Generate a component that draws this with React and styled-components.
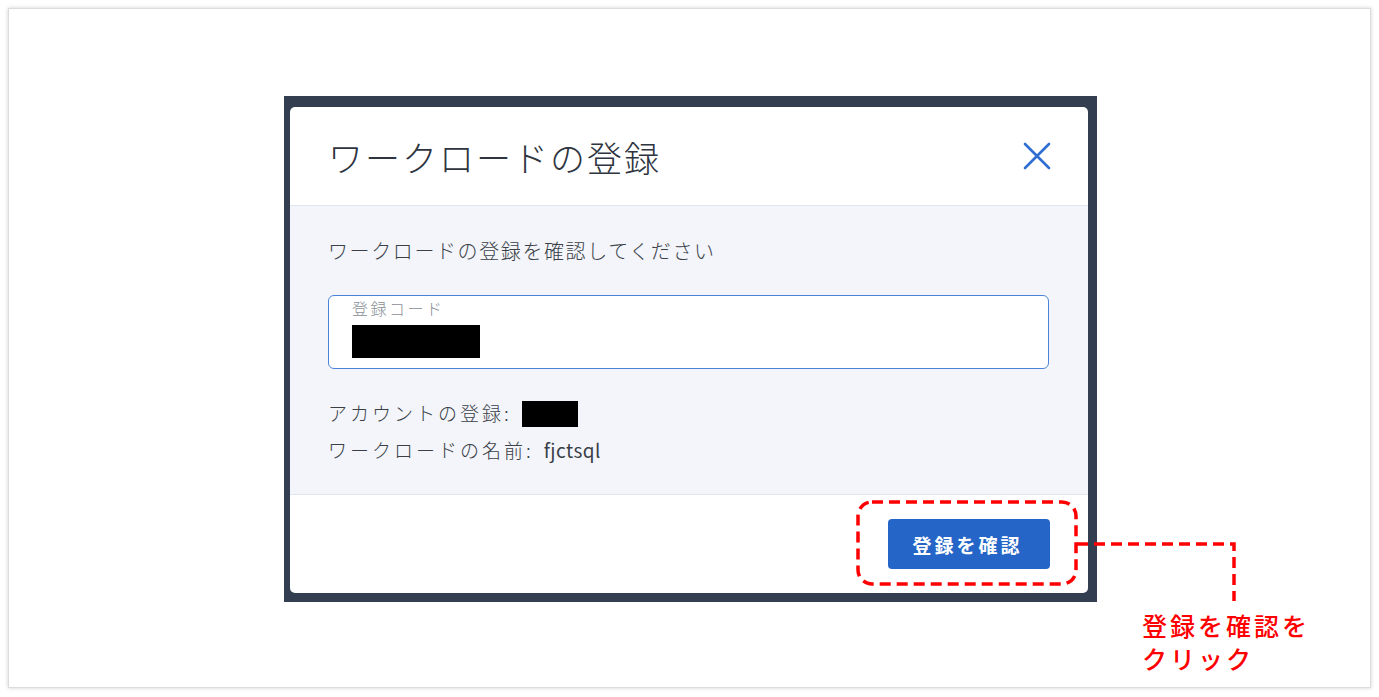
import styled, { createGlobalStyle } from 'styled-components';

const Global = createGlobalStyle`
    body {
        margin: 0;
        background: #ffffff;
        font-family: 'Noto Sans', 'Noto Sans CJK JP', sans-serif;
    }
`;

const Frame = styled.div`
    position: relative;
    box-sizing: border-box;
    width: 1363px;
    height: 680px;
    margin: 8px;
    padding: 87px 0 0 275px;
    background: #ffffff;
    border: 1px solid #dcdcdc;
    box-shadow: 0 0 4px rgba(0, 0, 0, 0.18);
`;

const Backdrop = styled.div`
    box-sizing: border-box;
    width: 813px;
    height: 506px;
    padding: 11px 9px 9px 6px;
    background: #333f51;
`;

const Dialog = styled.div`
    display: flex;
    flex-direction: column;
    width: 798px;
    height: 486px;
    border-radius: 5px;
    overflow: hidden;
    background: #ffffff;
`;

const Header = styled.div`
    display: flex;
    align-items: center;
    justify-content: space-between;
    height: 99px;
    padding: 0 36px 0 38px;
    border-bottom: 1px solid #dfe5f0;
    box-sizing: border-box;
`;

const Title = styled.h1`
    margin: 0;
    font-family: 'Noto Sans CJK JP', sans-serif;
    font-size: 35px;
    font-weight: 300;
    color: #2e3440;
    letter-spacing: 2px;
`;

const Close = styled.button`
    display: flex;
    padding: 0;
    border: none;
    background: none;
`;

const Body = styled.div`
    flex: 1;
    padding: 30px 38px 0 38px;
    background: #f3f5fa;
    font-family: 'Noto Sans CJK JP', sans-serif;
    color: #3a3f48;
`;

const Lead = styled.p`
    margin: 0 0 30px 0;
    font-size: 20px;
    font-weight: 300;
    letter-spacing: 1.6px;
`;

const Field = styled.div`
    box-sizing: border-box;
    width: 721px;
    height: 74px;
    padding: 0 24px 0 23px;
    background: #ffffff;
    border: 1.5px solid #4a84d9;
    border-radius: 6px;
`;

const FieldLabel = styled.div`
    font-size: 16px;
    font-weight: 300;
    color: #8a8f98;
    line-height: 24px;
    letter-spacing: 2.5px;
    margin-bottom: 5px;
`;

const Redact = styled.span`
    display: inline-block;
    width: ${({ w }) => w}px;
    height: ${({ h }) => h}px;
    background: #000000;
    vertical-align: middle;
`;

const Info = styled.div`
    margin-top: 29px;
    display: flex;
    flex-direction: column;
    gap: 9px;
`;

const InfoRow = styled.div`
    display: flex;
    align-items: center;
    height: 28px;
    font-size: 19px;
    font-weight: 300;
    color: #3a3f48;
    letter-spacing: 3px;
`;

const Value = styled.span`
    margin-left: 10px;
    font-weight: 400;
    letter-spacing: 0.5px;
`;

const Footer = styled.div`
    display: flex;
    align-items: center;
    justify-content: flex-end;
    height: 99px;
    padding: 0 38px 0 0;
    box-sizing: border-box;
    border-top: 1px solid #dfe5f0;
`;

const Confirm = styled.button`
    width: 162px;
    height: 50px;
    border: none;
    border-radius: 4px;
    background: #2565c7;
    color: #ffffff;
    font-family: 'Noto Sans CJK JP', sans-serif;
    font-size: 19px;
    font-weight: 700;
    letter-spacing: 3px;
    padding-left: 3px;
`;

const Callout = styled.svg`
    position: absolute;
    left: 0;
    top: 0;
    pointer-events: none;
`;

const Note = styled.div`
    position: absolute;
    left: 1133px;
    top: 600px;
    font-family: 'Noto Sans CJK JP', sans-serif;
    font-size: 25px;
    font-weight: 500;
    line-height: 33px;
    color: #ff0000;
    letter-spacing: 3px;
`;

const App = () => {
    return (
        <>
            <Global />
            <Frame>
                <Backdrop>
                    <Dialog>
                        <Header>
                            <Title>ワークロードの登録</Title>
                            <Close aria-label="close">
                                <svg width="30" height="30" viewBox="0 0 30 30">
                                    <path d="M3 3 L27 27 M27 3 L3 27" stroke="#2f6fd1" strokeWidth="2.6" strokeLinecap="round" />
                                </svg>
                            </Close>
                        </Header>
                        <Body>
                            <Lead>ワークロードの登録を確認してください</Lead>
                            <Field>
                                <FieldLabel>登録コード</FieldLabel>
                                <Redact w={128} h={33} />
                            </Field>
                            <Info>
                                <InfoRow>アカウントの登録:<Value><Redact w={56} h={26} /></Value></InfoRow>
                                <InfoRow>ワークロードの名前:<Value>fjctsql</Value></InfoRow>
                            </Info>
                        </Body>
                        <Footer>
                            <Confirm>登録を確認</Confirm>
                        </Footer>
                    </Dialog>
                </Backdrop>
                <Callout width="1363" height="680" viewBox="0 0 1363 680">
                    <rect x="849" y="493" width="218" height="82" rx="14" fill="none"
                        stroke="#ff0000" strokeWidth="3.5" strokeDasharray="11 6" />
                    <path d="M1068 535 H1225 V592" fill="none"
                        stroke="#ff0000" strokeWidth="3.5" strokeDasharray="11 6" />
                </Callout>
                <Note>登録を確認を<br />クリック</Note>
            </Frame>
        </>
    );
};

export default App;
